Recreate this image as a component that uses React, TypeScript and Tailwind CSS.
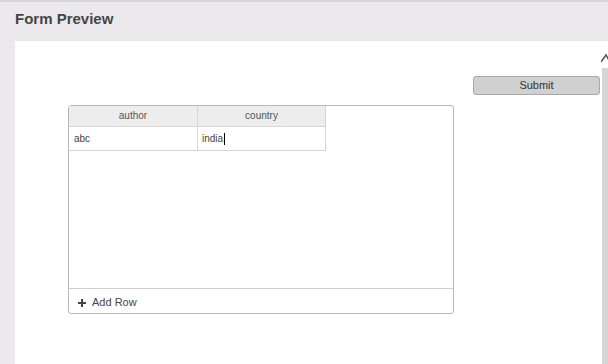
import React from "react";

export default function App() {
  const font = { fontFamily: '"Liberation Sans", Arial, sans-serif' };
  return (
    <div className="w-[608px] h-[364px] overflow-hidden bg-[#ece9ec] flex flex-col" style={font}>
      <div className="h-[41px] shrink-0 border-t-2 border-[#d6d6d6] pl-[15px] pt-[8px]">
        <div className="text-[15px] font-bold text-[#454545] leading-[18px]">Form Preview</div>
      </div>
      <div className="flex flex-1 pl-[15px]">
        <div className="flex-1 bg-white flex flex-col">
          <div className="flex justify-end mt-[35px] mr-[1px]">
            <button className="w-[127px] h-[19px] bg-[#d0d0d0] border border-[#a8a8a8] rounded-[3px] text-[11px] text-[#333] leading-[17px]">
              Submit
            </button>
          </div>
          <div className="ml-[53px] mt-[10px] w-[386px] h-[209px] border border-[#b8b8b8] rounded-[3px] flex flex-col">
            <div className="flex-1">
              <div className="flex">
                <div className="w-[129px] h-[21px] bg-[#ededed] border-r border-b border-[#d6d6d6] text-[10px] text-[#555] text-center leading-[20px]">author</div>
                <div className="w-[128px] h-[21px] bg-[#ededed] border-r border-b border-[#d6d6d6] text-[10px] text-[#555] text-center leading-[20px]">country</div>
              </div>
              <div className="flex">
                <div className="w-[129px] h-[24px] border-r border-b border-[#d6d6d6] text-[10px] text-[#444] pl-[5px] leading-[23px]">abc</div>
                <div className="w-[128px] h-[24px] border-r border-b border-[#d6d6d6] text-[10px] text-[#444] pl-[4px] leading-[23px] flex items-center">
                  <span>india</span>
                  <span className="inline-block w-[1px] h-[12px] bg-black ml-[1px]" />
                </div>
              </div>
            </div>
            <div className="h-[25px] border-t border-[#cfcfcf] flex items-center pt-[3px] pl-[9px] gap-[6px] text-[11px] text-[#444]">
              <svg width="8" height="8" viewBox="0 0 8 8">
                <rect x="3" y="0" width="2" height="8" fill="#444" />
                <rect x="0" y="3" width="8" height="2" fill="#444" />
              </svg>
              <span>Add Row</span>
            </div>
          </div>
        </div>
        <div className="w-[7px] flex flex-col bg-white">
          <div className="h-[27px] relative">
            <svg width="7" height="27" viewBox="0 0 7 27" className="absolute left-0 top-0">
              <polyline points="0,21 5,14 9,21" fill="none" stroke="#555" strokeWidth="1.5" />
            </svg>
          </div>
          <div className="flex-1 bg-[#d4d6d4] ml-[1px]" />
        </div>
      </div>
    </div>
  );
}
